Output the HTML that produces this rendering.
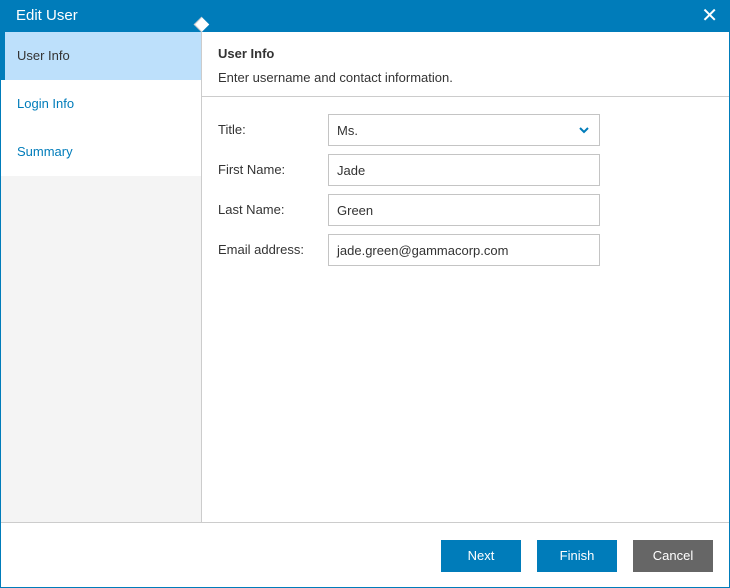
<html><head><style>
body{margin:0;width:730px;height:588px;font-family:"Liberation Sans",sans-serif;font-size:13px;color:#333;overflow:hidden}
.win{position:absolute;left:0;top:0;width:728px;height:586px;border:1px solid #007cba;background:#fff}
.hd{position:absolute;left:-1px;top:-1px;width:730px;height:32px;background:#007cba;color:#fff;font-size:15px;line-height:32px}
.hd span{margin-left:16px}
.x{position:absolute;right:12px;top:0;font-size:20px}
.side{position:absolute;left:0;top:31px;width:200px;height:490px;background:#f4f4f4;border-right:1px solid #ccc}
.it{height:48px;line-height:48px;padding-left:16px;background:#fff;color:#007cba}
.it.a{background:#bde0fb;color:#333;border-left:4px solid #007cba;padding-left:12px}
.arrow{position:absolute;left:195px;top:18px;width:10px;height:10px;background:#fff;transform:rotate(45deg);border-left:1px solid #ccc;border-bottom:1px solid #ccc}
.main{position:absolute;left:201px;top:31px;right:0}
.t{font-weight:bold;margin:14px 0 0 16px}
.s{margin:9px 0 0 16px}
.hr{position:absolute;top:64px;left:0;right:0;border-top:1px solid #ccc}
.row{position:absolute;left:16px;height:32px;line-height:32px}
.in{position:absolute;left:110px;top:0;width:270px;height:30px;border:1px solid #c4c4c4;padding-left:8px;box-sizing:content-box}
.ft{position:absolute;left:0;right:0;top:521px;border-top:1px solid #ccc}
.b{position:absolute;top:539px;width:80px;height:32px;line-height:32px;text-align:center;color:#fff;background:#007cba}
</style></head><body><div class="win">
<div class="hd"><span>Edit User</span><span class="x">✕</span></div>
<div class="side"><div class="it a">User Info</div><div class="it">Login Info</div><div class="it">Summary</div></div>
<div class="arrow"></div>
<div class="main">
<div class="t">User Info</div><div class="s">Enter username and contact information.</div>
<div class="hr"></div>
<div class="row" style="top:82px">Title:<div class="in" style="width:262px">Ms.<svg style="position:absolute;right:10px;top:12px" width="10" height="7"><path d="M1 1L5 5L9 1" stroke="#007cba" stroke-width="2" fill="none"/></svg></div></div>
<div class="row" style="top:122px">First Name:<div class="in" style="width:262px">Jade</div></div>
<div class="row" style="top:162px">Last Name:<div class="in" style="width:262px">Green</div></div>
<div class="row" style="top:202px">Email address:<div class="in" style="width:262px">jade.green@gammacorp.com</div></div>
</div>
<div class="ft"></div>
<div class="b" style="left:440px">Next</div><div class="b" style="left:536px">Finish</div><div class="b" style="left:632px;background:#666">Cancel</div>
</div></body></html>
